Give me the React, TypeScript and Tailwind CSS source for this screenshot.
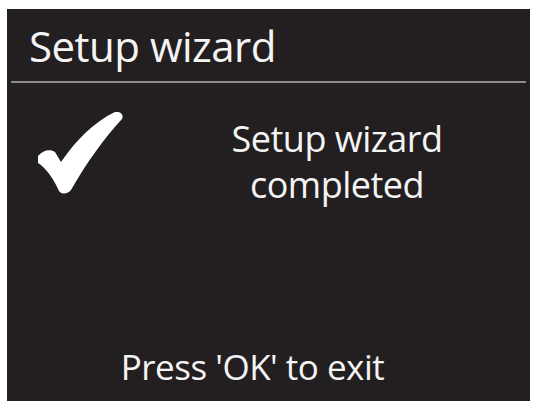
export default function App() {
  return (
    <div className="w-[534px] h-[401px] bg-white pl-[7px] pt-[9px] pr-[4px] overflow-hidden">
      <div
        className="flex h-full flex-col bg-[#231f20] text-[#f4f4f4]"
        style={{ fontFamily: '"Open Sans", "Liberation Sans", sans-serif' }}
      >
        <div className="h-[72px] pl-[22px] pt-[9px] text-[42px] leading-[56px] tracking-[-0.5px]">
          Setup wizard
        </div>
        <div className="mx-[4px] h-[2px] bg-[#8d8b8b]" />
        <div className="flex h-[130px] items-start">
          <div className="w-[150px] pl-[31px] pt-[29px]">
            <svg width="86" height="82" viewBox="0 0 86 82">
              <path
                d="M0 44 C5 38 12 37 17 40 L23 50 C38 28 56 10 77 0 C83 -1 86 3 84 7 C66 26 48 52 33 78 C30 82 24 83 21 79 C15 66 8 56 0 51 Z"
                fill="#ffffff"
              />
            </svg>
          </div>
          <div className="flex-1 pr-[13px] pt-[33px] text-center text-[36px] leading-[46px] tracking-[-0.5px]">
            <div>Setup wizard</div>
            <div>completed</div>
          </div>
        </div>
        <div className="flex flex-1 items-end justify-center pb-[8px] pr-[32px] text-[35px] tracking-[-0.5px]">
          Press 'OK' to exit
        </div>
      </div>
    </div>
  );
}
